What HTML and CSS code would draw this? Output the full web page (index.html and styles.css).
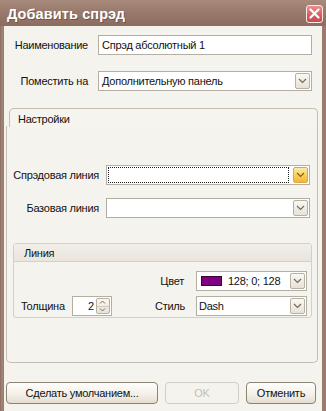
FILE: index.html
```html
<!DOCTYPE html>
<html>
<head>
<meta charset="utf-8">
<link rel="stylesheet" href="styles.css">
</head>
<body>
<div class="window">
  <div class="titlebar">
    <span class="title">Добавить спрэд</span>
    <span class="close"><svg width="11" height="11" viewBox="0 0 11 11"><path d="M1.5 1.5 L9.5 9.5 M9.5 1.5 L1.5 9.5" stroke="#fff" stroke-width="2.2" stroke-linecap="round"/></svg></span>
  </div>
  <div class="client">
    <div class="row top-row">
      <span class="lbl top-lbl">Наименование</span>
      <div class="field top-field"><span class="val">Спрэд абсолютный 1</span></div>
    </div>
    <div class="row top-row second">
      <span class="lbl top-lbl">Поместить на</span>
      <div class="field top-field"><span class="val">Дополнительную панель</span><span class="dd"><svg width="9" height="6" viewBox="0 0 9 6"><path d="M1 1 L4.5 4.5 L8 1" fill="none" stroke="#6f6a62" stroke-width="1.2"/></svg></span></div>
    </div>

    <div class="tabs">
      <div class="tab-head">Настройки</div>
      <div class="tab-page">
        <div class="row page-row">
          <span class="lbl page-lbl">Спрэдовая линия</span>
          <div class="field page-field"><span class="focus"></span><span class="dd hot"><svg width="9" height="6" viewBox="0 0 9 6"><path d="M1 1 L4.5 4.5 L8 1" fill="none" stroke="#8a5a10" stroke-width="1.2"/></svg></span></div>
        </div>
        <div class="row page-row second-page">
          <span class="lbl page-lbl">Базовая линия</span>
          <div class="field page-field"><span class="val"></span><span class="dd"><svg width="9" height="6" viewBox="0 0 9 6"><path d="M1 1 L4.5 4.5 L8 1" fill="none" stroke="#6f6a62" stroke-width="1.2"/></svg></span></div>
        </div>

        <div class="group">
          <div class="group-head">Линия</div>
          <div class="group-body">
            <div class="g-row color-row">
              <span class="lbl">Цвет</span>
              <div class="field g-field"><span class="swatch"></span><span class="val">128; 0; 128</span><span class="dd"><svg width="9" height="6" viewBox="0 0 9 6"><path d="M1 1 L4.5 4.5 L8 1" fill="none" stroke="#6f6a62" stroke-width="1.2"/></svg></span></div>
            </div>
            <div class="g-row style-row">
              <span class="lbl">Толщина</span>
              <div class="field spin"><span class="num">2</span><span class="spin-btns"><span class="sb"><svg width="7" height="4" viewBox="0 0 7 4"><path d="M1 3.5 L3.5 1 L6 3.5" fill="none" stroke="#6f6a62" stroke-width="1"/></svg></span><span class="sb"><svg width="7" height="4" viewBox="0 0 7 4"><path d="M1 0.5 L3.5 3 L6 0.5" fill="none" stroke="#6f6a62" stroke-width="1"/></svg></span></span></div>
              <span class="lbl style-lbl">Стиль</span>
              <div class="field g-field"><span class="val dash">Dash</span><span class="dd"><svg width="9" height="6" viewBox="0 0 9 6"><path d="M1 1 L4.5 4.5 L8 1" fill="none" stroke="#6f6a62" stroke-width="1.2"/></svg></span></div>
            </div>
          </div>
        </div>
      </div>
    </div>

    <div class="buttons">
      <button class="btn btn-default">Сделать умолчанием...</button>
      <button class="btn btn-ok" disabled>OK</button>
      <button class="btn btn-cancel">Отменить</button>
    </div>
  </div>
</div>
</body>
</html>
```

FILE: styles.css
```css
* { box-sizing: border-box; }
html, body { margin: 0; padding: 0; }
body {
  width: 326px;
  height: 411px;
  overflow: hidden;
  font-family: "Liberation Sans", Arial, sans-serif;
  font-size: 11px;
  letter-spacing: -0.25px;
  color: #111;
  background: #8f6f60;
}
.window {
  width: 326px;
  height: 411px;
  display: flex;
  flex-direction: column;
  background: linear-gradient(90deg, #8a6a5b 0, #a4897c 2px, #9a7b6d 3px);
}
.titlebar {
  height: 26px;
  display: flex;
  align-items: center;
  justify-content: space-between;
  padding: 0 3px 0 7px;
  background: linear-gradient(#a88b7d 0, #9a7b6d 40%, #8c6c5e 100%);
}
.title {
  color: #fff;
  font-weight: bold;
  font-size: 14.5px;
  letter-spacing: 0.1px;
  text-shadow: 1px 1px 0 rgba(70, 45, 35, 0.45);
  padding-top: 1px;
}
.close {
  width: 17px;
  height: 18px;
  border: 1px solid #fbeaea;
  border-radius: 3px;
  background: linear-gradient(#ef8e8e, #d85a5a 60%, #c94c4c);
  display: flex;
  align-items: center;
  justify-content: center;
  margin-top: 1px;
}
.client {
  flex: 1;
  margin: 0 4px;
  background: #f5f3ee;
  padding-top: 9px;
  display: flex;
  flex-direction: column;
}
.row {
  display: flex;
  align-items: center;
  height: 20px;
}
.second { margin-top: 16px; }
.lbl { white-space: nowrap; }
.top-lbl {
  width: 84px;
  text-align: right;
  margin-right: 10px;
}
.field {
  height: 20px;
  background: #fff;
  border: 1px solid #b4afa5;
  display: flex;
  align-items: center;
  position: relative;
}
.top-field { width: 214px; }
.val {
  flex: 1;
  padding-left: 3px;
  white-space: nowrap;
}
.dd {
  width: 15px;
  height: 16px;
  margin-right: 1px;
  border: 1px solid #b8b0a2;
  border-radius: 2px;
  background: linear-gradient(#faf8f3, #e8e2d6);
  display: flex;
  align-items: center;
  justify-content: center;
  margin-left: auto;
}
.dd.hot {
  border-color: #e3a73e;
  background: linear-gradient(#fdeaa8, #f7cf5e 55%, #f0b73a);
}
.tabs {
  margin-top: 17px;
  margin-left: 2px;
  width: 312px;
}
.tab-head {
  height: 19px;
  margin-left: 3px;
  border: 1px solid #c4bdb0;
  border-bottom: none;
  border-radius: 5px 5px 0 0;
  background: #f6f4ef;
  padding: 4px 0 0 8px;
  position: relative;
  z-index: 1;
}
.tab-page {
  margin-top: -1px;
  height: 237px;
  border: 1px solid #c4bdb0;
  border-top: none;
  border-radius: 0 0 5px 5px;
  background: #f5f3ee;
  padding-top: 39px;
}
.page-lbl {
  width: 92px;
  text-align: right;
  margin-right: 7px;
}
.page-field { width: 204px; }
.second-page { margin-top: 13px; }
.focus {
  flex: 1;
  height: 16px;
  margin: 0 4px 0 1px;
  border: 1px dotted #222;
}
.group {
  margin: 25px 5px 0 6px;
  height: 75px;
  border: 1px solid #d5cfc4;
  border-radius: 3px;
  background: #f5f3ee;
}
.group-head {
  height: 18px;
  padding: 3px 0 0 10px;
  background: linear-gradient(#f2efe9, #e9e5dd);
  border-bottom: 1px solid #d5cfc4;
}
.group-body {
  padding: 9px 4px 0 7px;
}
.g-row {
  display: flex;
  align-items: center;
  height: 20px;
}
.color-row {
  justify-content: flex-end;
  height: 19px;
}
.color-row .lbl { margin-right: 12px; }
.style-row { margin-top: 6px; }
.g-field { width: 111px; }
.swatch {
  width: 21px;
  height: 10px;
  margin-left: 4px;
  background: #800080;
  border: 1px solid #3a003a;
}
.color-row .val { padding-left: 6px; }
.spin {
  width: 40px;
  margin-left: 7px;
}
.num {
  flex: 1;
  text-align: right;
  padding-right: 2px;
}
.spin-btns {
  display: flex;
  flex-direction: column;
  width: 14px;
  height: 16px;
  margin-right: 1px;
  border: 1px solid #b8b0a2;
  border-radius: 2px;
  background: linear-gradient(#faf8f3, #e8e2d6);
}
.sb {
  flex: 1;
  display: flex;
  align-items: center;
  justify-content: center;
}
.sb + .sb { border-top: 1px solid #cfc8bb; }
.style-lbl { margin-left: auto; margin-right: 11px; }
.dash { padding-left: 2px; }
.buttons {
  margin-top: 19px;
  margin-left: 2px;
  display: flex;
  gap: 7px;
}
.btn {
  height: 22px;
  font-family: "Liberation Sans", Arial, sans-serif;
  font-size: 11px;
  letter-spacing: -0.25px;
  color: #111;
  border: 1px solid #8b8375;
  border-radius: 4px;
  background: linear-gradient(#fffefb, #f3efe7 60%, #e4ddcf);
  padding: 0;
}
.btn-default { width: 152px; }
.btn-ok {
  width: 74px;
  color: #c2beb6;
  border-color: #d3cec5;
  background: #f5f3ee;
}
.btn-cancel { width: 70px; }
```
